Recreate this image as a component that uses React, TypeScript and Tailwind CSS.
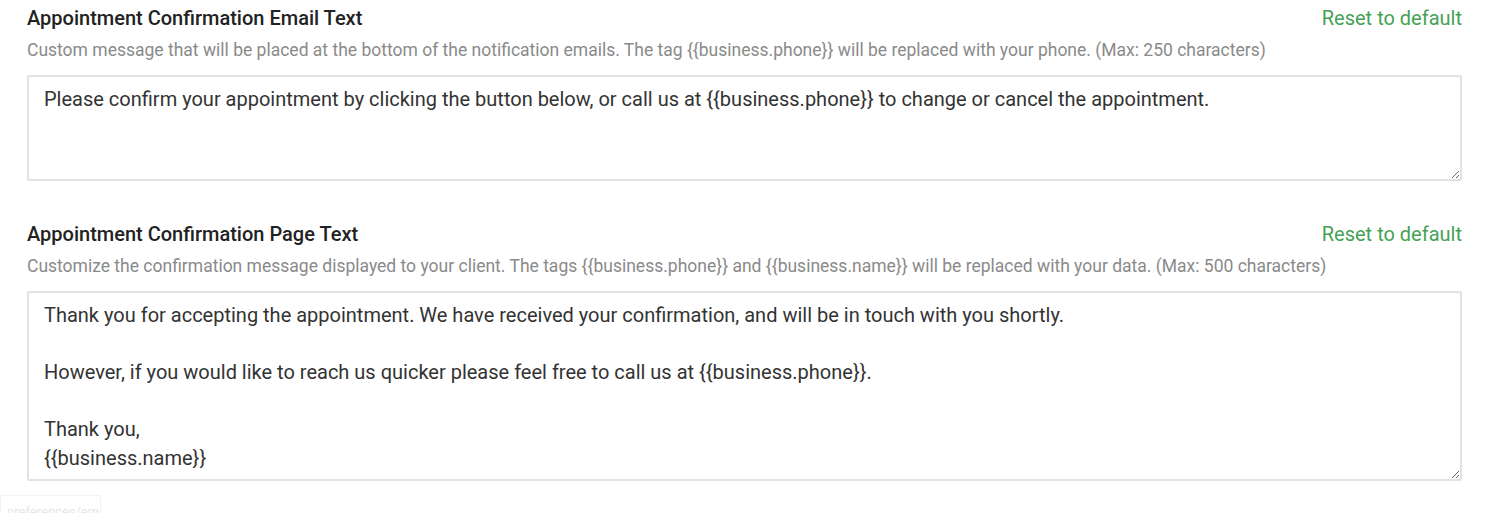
import React from "react";

const font = { fontFamily: "Roboto, 'Liberation Sans', sans-serif" };

function Field({
  title,
  hint,
  value,
  heightClass,
}: {
  title: string;
  hint: string;
  value: string;
  heightClass: string;
}) {
  return (
    <div className="flex flex-col">
      <div className="flex items-center justify-between h-[36px]">
        <h3 className="text-[20px] font-medium text-[#222]">{title}</h3>
        <button className="text-[20px] text-[#46a256] cursor-pointer">Reset to default</button>
      </div>
      <p className="text-[17.5px] text-[#8a8a8a] leading-[28px]">{hint}</p>
      <textarea
        defaultValue={value}
        className={`mt-[11px] w-full ${heightClass} border-2 border-[#e2e2e2] rounded-[2px] px-[15px] py-[8px] text-[20px] leading-[28.5px] text-[#333] resize-y outline-none`}
      />
    </div>
  );
}

export default function App() {
  return (
    <div className="bg-white min-h-[513px] overflow-hidden" style={font}>
      <div className="pl-[27px] pr-[25px] flex flex-col gap-[35px]">
        <Field
          title="Appointment Confirmation Email Text"
          hint="Custom message that will be placed at the bottom of the notification emails. The tag {{business.phone}} will be replaced with your phone. (Max: 250 characters)"
          value="Please confirm your appointment by clicking the button below, or call us at {{business.phone}} to change or cancel the appointment."
          heightClass="h-[106px]"
        />
        <Field
          title="Appointment Confirmation Page Text"
          hint="Customize the confirmation message displayed to your client. The tags {{business.phone}} and {{business.name}} will be replaced with your data. (Max: 500 characters)"
          value={
            "Thank you for accepting the appointment. We have received your confirmation, and will be in touch with you shortly.\n\nHowever, if you would like to reach us quicker please feel free to call us at {{business.phone}}.\n\nThank you,\n{{business.name}}"
          }
          heightClass="h-[190px]"
        />
      </div>
      <div className="mt-[14px] w-[101px] h-[24px] border border-[#f3f3f3] px-[6px] pt-[6px] text-[13px] text-[#e6e6e6] overflow-hidden whitespace-nowrap">
        preferences/email
      </div>
    </div>
  );
}
